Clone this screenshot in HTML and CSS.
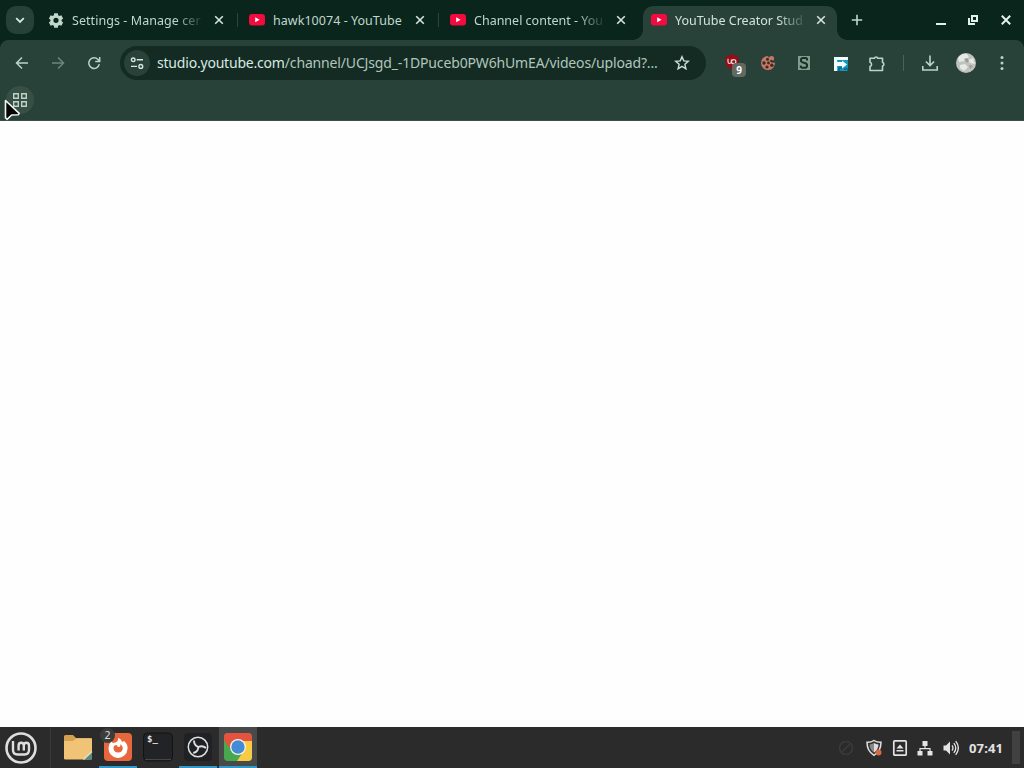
FILE: index.html
```html
<!DOCTYPE html>
<html lang="en">
<head>
<meta charset="utf-8">
<title>YouTube Creator Studio</title>
<link rel="stylesheet" href="styles.css">
</head>
<body>
<svg class="defs" aria-hidden="true">
  <symbol id="x" viewBox="0 0 12 12"><path d="M2.2 2.2l7.6 7.6M9.8 2.2L2.2 9.8" fill="none" stroke="currentColor" stroke-width="1.6"/></symbol>
  <symbol id="yt" viewBox="0 0 16 16"><rect x="0" y="2" width="16" height="11.6" rx="3" fill="#f20b3e"/><path d="M6.2 5.3v5l4.4-2.5z" fill="#fff"/></symbol>
</svg>
<div class="desktop">
  <header class="tabstrip">
    <button class="search"><svg width="12" height="12" viewBox="0 0 12 12"><path d="M2.2 4.2L6 8l3.8-3.8" fill="none" stroke="currentColor" stroke-width="1.8"/></svg></button>
    <div class="tab">
      <svg class="fav" viewBox="0 0 24 24"><path fill="currentColor" fill-rule="evenodd" d="M9.3 2h5.4l.6 3 1.7 1 3-1 2.7 4.700-2.300 2v2.100l2.300 2-2.700 4.700-3-1-1.700 1-.6 3H9.300l-.6-3-1.700-1-3 1-2.700-4.700 2.300-2v-2.100l-2.300-2L4 5l3 1 1.700-1zM12 8.600a3.900 3.900 0 1 0 0 7.800 3.900 3.900 0 0 0 0-7.800z"/></svg>
      <span class="title t1">Settings - Manage cer</span><svg class="close"><use href="#x"/></svg>
    </div>
    <div class="tab">
      <svg class="fav"><use href="#yt"/></svg>
      <span class="title t2">hawk10074 - YouTube</span><svg class="close"><use href="#x"/></svg>
    </div>
    <div class="tab">
      <svg class="fav"><use href="#yt"/></svg>
      <span class="title t3">Channel content - You</span><svg class="close"><use href="#x"/></svg>
    </div>
    <div class="tab active">
      <svg class="fav"><use href="#yt"/></svg>
      <span class="title t4">YouTube Creator Stud</span><svg class="close"><use href="#x"/></svg>
    </div>
    <button class="newtab"><svg width="12" height="12" viewBox="0 0 12 12"><path d="M6 .8v10.4M.8 6h10.4" stroke="currentColor" stroke-width="1.6"/></svg></button>
    <div class="winbtns">
      <svg width="12" height="12" viewBox="0 0 12 12"><path d="M2 10h10" stroke="currentColor" stroke-width="2"/></svg>
      <svg width="12" height="12" viewBox="0 0 12 12"><path d="M5 2h5v5H5zM2 4v6h6" fill="none" stroke="currentColor" stroke-width="2"/></svg>
      <svg width="12" height="12" viewBox="0 0 12 12"><path d="M1.8 1.8l8.4 8.4M10.2 1.8l-8.4 8.4" stroke="currentColor" stroke-width="2"/></svg>
    </div>
  </header>

  <div class="chrome">
    <nav class="toolbar">
      <span class="tool"><svg width="14" height="14" viewBox="0 0 14 14"><path d="M13 7H1.8M7 1.5L1.500 7 7 12.500" fill="none" stroke="currentColor" stroke-width="1.5"/></svg></span>
      <span class="tool dim"><svg width="14" height="14" viewBox="0 0 14 14"><path d="M1 7h11.2M7 1.5L12.500 7 7 12.500" fill="none" stroke="currentColor" stroke-width="1.5"/></svg></span>
      <span class="tool"><svg width="14" height="14" viewBox="0 0 14 14"><path d="M12.3 8.2A5.300 5.300 0 1 1 11 3.500L12.400 5M12.700 1v4.600H8.200" fill="none" stroke="currentColor" stroke-width="1.5"/></svg></span>
      <div class="omnibox">
        <span class="site"><svg width="14" height="14" viewBox="0 0 14 14" fill="none" stroke="currentColor" stroke-width="1.4"><circle cx="3.2" cy="3.8" r="1.8"/><circle cx="10.8" cy="10.4" r="1.9"/><path d="M6.7 3.8H13M1 10.400h6"/></svg></span>
        <span class="url"><b>studio.youtube.com</b>/channel/UCJsgd_-1DPuceb0PW6hUmEA/videos/upload?...</span>
        <svg class="star" viewBox="0 0 16 16"><path d="M8 1.7l1.800 4.200 4.500.4-3.400 3 1 4.500L8 11.400l-3.900 2.400 1-4.500-3.400-3 4.500-.4z" fill="none" stroke="currentColor" stroke-width="1.4"/></svg>
      </div>
      <span class="tool ublock"><svg width="16" height="16" viewBox="0 0 16 16"><path d="M8 0l3 1.500L14.500 3v5.500C14 12 11.500 14 8 15.500 4.500 14 2 12 1.500 8.500V3L5 1.500z" fill="#980b17"/><path d="M4 4.800v3q0 1.700 1.500 1.700T7.300 8V5.500M7.500 8q0-2.300 2.200-2.300t2.200 2-2.200 2-2.200-1.700" fill="none" stroke="#e9d7d7" stroke-width="1.2"/></svg><i class="count">9</i></span>
      <span class="tool"><svg width="16" height="16" viewBox="0 0 16 16"><path d="M8 1a3 3 0 0 0 3 2.500 3 3 0 0 0 4 4A7 7 0 1 1 8 1z" fill="#c87666"/><circle cx="11.500" cy="3.600" r="2.600" fill="#c87666"/><g fill="#33302a"><circle cx="7.500" cy="4.300" r="1.500"/><circle cx="4" cy="8" r="1.700"/><circle cx="8.500" cy="8" r="1.400"/><circle cx="7" cy="12" r="1.600"/><circle cx="11.800" cy="10.300" r="1.700"/><circle cx="11.500" cy="6" r="1.300"/></g></svg></span>
      <span class="tool"><svg width="14" height="16" viewBox="0 0 14 16"><rect x="1" y="1" width="12" height="14" fill="#829d90"/><path d="M10 5.500V3.800L9 3H5.300L4 4.200v2L5 7.200 9 8.500l1 1v2L8.800 12.800H5L3.800 12V10.400" fill="none" stroke="#1d3028" stroke-width="2"/></svg></span>
      <span class="tool nudge"><svg width="14" height="14" viewBox="0 0 14 14"><path d="M0 0h14v14H0z" fill="#1594b8"/><path d="M0 0h14v3H3.200v2H8V3.500L13 7.500l-5 4V9H3.200v5H0z" fill="#f3fcff"/><path d="M5 14v-3h3M10 12h4v2" fill="none" stroke="#096787" stroke-width="1.5"/></svg></span>
      <span class="tool nudge"><svg width="18" height="18" viewBox="0 0 18 18"><path d="M2 3.300h4.500a1.700 1.700 0 0 1 3.300 0H14.500v4.200a1.800 1.800 0 0 1 0 3.500V15.500H2v-4a2.200 2.200 0 0 0 0-4.200z" fill="none" stroke="currentColor" stroke-width="1.6" stroke-linejoin="round"/></svg></span>
      <span class="divider"></span>
      <span class="tool"><svg width="18" height="18" viewBox="0 0 18 18"><path d="M9 1.500v10M4.900 7.500L9 11.600l4.100-4.100M1.800 12v4h14.400v-4" fill="none" stroke="currentColor" stroke-width="1.6"/></svg></span>
      <span class="tool"><svg width="20" height="20" viewBox="0 0 20 20"><circle cx="10" cy="10" r="10" fill="#bfc2bf"/><path d="M2 5q4-5 9-4l2 3-5 4-5 1zM12 7l5-2 2 6-5-1zM4 12l5-1 3 3-4 4-4-3z" fill="#e6e9e6"/><path d="M8 6l3-1 2 3-2 2zM13 12l4 1-3 3z" fill="#979c98"/></svg></span>
      <span class="tool"><svg width="4" height="16" viewBox="0 0 4 16" fill="currentColor"><circle cx="2" cy="2.5" r="1.5"/><circle cx="2" cy="8" r="1.5"/><circle cx="2" cy="13.5" r="1.5"/></svg></span>
    </nav>
    <div class="bookmarks"><span class="apps"><svg width="16" height="16" viewBox="0 0 16 16"><path d="M1.700 1.700h4.600v4.600H1.700zM9.700 1.700h4.600v4.600H9.700zM1.700 9.700h4.600v4.600H1.700zM9.700 9.700h4.600v4.600H9.700z" fill="none" stroke="currentColor" stroke-width="1.4"/></svg></span></div>
  </div>

  <main class="page"></main>

  <footer class="panel">
    <span class="menu"><svg width="34" height="34" viewBox="0 0 34 34" fill="none" stroke="#dedede"><circle cx="17" cy="17" r="14.5" stroke-width="2.6"/><path d="M9 10v9q0 4.500 4.500 4.500h7q4.500 0 4.500-4.500v-4.500q0-2.700-2.600-2.700t-2.600 2.700v5m0-5q0-2.700-2.600-2.700t-2.600 2.700v5" stroke-width="2.4"/></svg></span>
    <span class="task"><svg width="30" height="32" viewBox="0 0 30 32"><path d="M1 4.500Q1 3 2.500 3H10l3 3h14.500Q29 6 29 7.500V27H1z" fill="#d5a14e"/><path d="M1 9h9l3-2.500h16V26q0 1.500-1.500 1.500h-25Q1 27.500 1 26z" fill="#f1c377"/><path d="M21 27.500L29 19.500v8z" fill="#578b80"/><path d="M20.500 27.500l8.500-8" stroke="#e6e3bd" stroke-width="1.2"/></svg></span>
    <span class="task open"><svg width="30" height="32" viewBox="0 0 30 32"><rect x="1" y="1" width="28" height="28" rx="4" fill="#e8663b"/><path d="M15 6q3 .5 4 4l2-1q4 3 3.500 8A9.500 9.500 0 0 1 5.500 16q0-4 3-7l1 2 3-.5q3-1 2.500-4.500z" fill="#fff"/><path d="M14 13q-4 0-3.500 3.500a4.700 4.700 0 0 0 9.300 0q0-3-2.300-4.500.2 3-1.500 3-2 .2-2-2z" fill="#e8663b"/></svg><i class="badge">2</i></span>
    <span class="task"><svg width="30" height="32" viewBox="0 0 30 32"><rect x=".5" y="1" width="29" height="28" rx="4" fill="#222326" stroke="#141414"/><path d="M2 27.500h26" stroke="#45474b"/><text class="prompt" x="4" y="10">$_</text></svg></span>
    <span class="task open"><svg width="30" height="32" viewBox="0 0 30 32"><rect x="1" y="1" width="28" height="28" rx="4" fill="#202124"/><g fill="none" stroke="#dedede"><circle cx="15" cy="15" r="9.7" stroke-width="1.5"/><path d="M11 8.500q0 5 4.300 6.500 4.200-2 7.700 1M15.300 15q.2 4.500-5 6" stroke-width="1.9"/></g></svg></span>
    <span class="task open current"><svg width="30" height="32" viewBox="0 0 30 32"><clipPath id="c"><rect x="1" y="1" width="28" height="28" rx="4"/></clipPath><g clip-path="url(#c)"><path d="M1 1h28v28H1z" fill="#48a84e"/><path d="M1 1h28v9H15L8 18 1 8z" fill="#e5533f"/><path d="M15 9h14v20H14l8-12z" fill="#f7cc43"/></g><circle cx="15" cy="15" r="8" fill="#f6f3ee"/><circle cx="15" cy="15" r="6.700" fill="#438bd4"/></svg></span>
    <div class="tray">
      <span class="w28"><svg width="16" height="16" viewBox="0 0 16 16" fill="none" stroke="#3b3b3b"><circle cx="8" cy="8" r="6.500" stroke-width="1.5"/><path d="M4 12l8-8" stroke-width="1.5"/></svg></span>
      <span class="w27 shield"><svg width="18" height="18" viewBox="0 0 18 18"><path d="M9 1.500q3 2 7 1.800 0 9-7 13-7-4-7-13Q6 3.500 9 1.500z" fill="#343434" stroke="#dedede" stroke-width="1.5"/><path d="M9 4q2 1.200 4.500 1.500-.2 5-4.500 8z" fill="#ddd"/><path d="M9 4Q7 5.200 4.500 5.500q.2 5 4.500 8z" fill="#888"/><circle cx="13.500" cy="13.500" r="3" fill="#db6842"/></svg></span>
      <span class="w25"><svg width="16" height="18" viewBox="0 0 16 18"><rect x="1.800" y="1.800" width="12.400" height="14.400" rx="1" fill="none" stroke="#e4e4e4" stroke-width="1.7"/><path d="M8 5.500l3.500 4h-7zM4.500 11h7v1.500h-7z" fill="#e4e4e4"/></svg></span>
      <span class="w26"><svg width="16" height="16" viewBox="0 0 16 16"><path d="M5.500 1h5v5h-5zM.5 11h5v4.500h-5zM10.500 11h5v4.500h-5z" fill="#e4e4e4"/><path d="M8 6v3M3 11V8.700h10V11" fill="none" stroke="#e4e4e4" stroke-width="1.2"/></svg></span>
      <span class="w26"><svg width="16" height="16" viewBox="0 0 16 16"><path d="M.5 5.500H3l4-4v13l-4-4H.5z" fill="#e4e4e4"/><path d="M9 5.500q2 2.500 0 5M10.800 3.200q4 4.800 0 9.600M12.700 1.200q5.300 6.800 0 13.600" fill="none" stroke="#e4e4e4" stroke-width="1.3"/></svg></span>
      <time>07:41</time>
      <span class="show-desktop"></span>
    </div>
  </footer>
</div>
<svg class="cursor" width="18" height="24" viewBox="0 0 18 24"><path d="M1.500 1.500v17.300l1.500 1.500 4.700-4.300 6.700-.3.800-1.400z" fill="#050706" stroke="#f4f6f5" stroke-width="1.6" stroke-linejoin="round"/></svg>
</body>
</html>
```

FILE: styles.css
```css
* { box-sizing: border-box; }
body { margin: 0; font-family: "Noto Sans", sans-serif; overflow: hidden; }
button { border: 0; padding: 0; background: none; color: inherit; }
svg { display: block; flex: none; }
i { font-style: normal; }
.defs { display: none; }
.desktop { width: 1024px; height: 768px; display: flex; flex-direction: column; background: #fefefe; }

.tabstrip { height: 40px; flex: none; display: flex; align-items: center; background: #0a251c; color: #c0d7cc; padding-left: 6px; }
.search { width: 28px; height: 28px; border-radius: 10px; background: #264137; display: grid; place-items: center; margin-right: 4px; color: #d5e8df; }
.tab { width: 201px; height: 40px; flex: none; display: flex; align-items: center; padding-left: 10px; position: relative; }
.tab:not(.active)::after { content: ""; position: absolute; right: 1px; top: 13px; width: 1px; height: 14px; background: #2c463c; }
.tab:nth-of-type(3)::after { display: none; }
.fav { width: 16px; height: 16px; margin-right: 8px; }
.title { width: 131px; font-size: 12.5px; line-height: 20px; padding-top: 1px; white-space: nowrap; -webkit-mask-image: linear-gradient(90deg, #000 103px, transparent 133px); mask-image: linear-gradient(90deg, #000 103px, transparent 133px); }
.t1 { letter-spacing: .06px; }
.t2 { -webkit-mask-image: none; mask-image: none; letter-spacing: .04px; }
.close { width: 12px; height: 12px; margin-left: 10px; color: #d3e5dc; }
.active { isolation: isolate; color: #d0e3da; }
.active .close { margin-left: 9px; }
.active::before { content: ""; position: absolute; z-index: -1; left: 2px; right: 5px; top: 6px; bottom: 0; border-radius: 10px 10px 0 0; background: #284239; }
.active::after { content: ""; position: absolute; z-index: -1; left: -8px; right: -5px; bottom: 0; height: 10px; background: radial-gradient(circle at 0 0, transparent 9.5px, #284239 10px) left / 10px 10px no-repeat, radial-gradient(circle at 100% 0, transparent 9.5px, #284239 10px) right / 10px 10px no-repeat; }
.newtab { width: 28px; height: 28px; display: grid; place-items: center; margin-left: 1px; }
.winbtns { margin-left: auto; display: flex; gap: 21px; padding-right: 12px; color: #e2f2ea; }

.chrome { height: 81px; flex: none; background: #284239; position: relative; color: #bdd1c7; border-bottom: 1px solid #3b5047; }
.chrome::before { content: ""; position: absolute; inset: 0 0 auto; height: 8px; background: radial-gradient(circle at 100% 100%, transparent 7.5px, #0a251c 8px) left / 8px 8px no-repeat, radial-gradient(circle at 0 100%, transparent 7.5px, #0a251c 8px) right / 8px 8px no-repeat; }
.toolbar { height: 46px; display: flex; align-items: center; padding: 0 4px; }
.tool { width: 36px; height: 34px; flex: none; display: grid; place-items: center; position: relative; }
.nudge { padding: 1px 0 0 2px; }
.dim { color: #6c8679; }
.omnibox { width: 586px; height: 34px; margin: 0 8px; border-radius: 17px; background: #142b23; display: flex; align-items: center; padding-left: 4px; flex: none; }
.site { width: 26px; height: 26px; border-radius: 13px; background: #284239; display: grid; place-items: center; margin-right: 7px; color: #d5e7de; }
.url { width: 517px; font-size: 14px; line-height: 24px; letter-spacing: -.155px; white-space: nowrap; color: #b0c6bb; }
.url b { font-weight: 400; color: #d8e9e0; letter-spacing: -.2px; }
.star { width: 16px; height: 16px; color: #cce0d6; }
.count { position: absolute; left: 18px; top: 17px; width: 14px; height: 14px; border-radius: 4px; background: #626963; color: #fff; font-size: 10px; font-weight: 700; line-height: 14px; text-align: center; }
.ublock svg { transform: translateY(-1px); }
.divider { width: 18px; height: 16px; display: flex; justify-content: center; }
.divider::before { content: ""; width: 1px; background: #4a6358; }
.bookmarks { padding-left: 6px; }
.apps { width: 28px; height: 28px; border-radius: 14px; background: #384f45; display: grid; place-items: center; }

.page { flex: 1; background: #fefefe; }

.panel { height: 41px; flex: none; background: #2b2b2b; display: flex; align-items: center; }
.menu { width: 51px; height: 41px; padding-left: 4px; display: flex; align-items: center; border-right: 1px solid #393939; margin-right: 7px; }
.task { width: 40px; height: 41px; position: relative; display: grid; place-items: center; }
.open { border: solid #2b2b2b; border-width: 0 1px; box-shadow: inset 0 -2px #3198c9; }
.current { background: #484a49; }
.badge { position: absolute; left: 1px; top: 1px; width: 15px; height: 15px; border-radius: 8px; background: #3b3d3d; color: #dedede; font-size: 10.5px; line-height: 15px; text-align: center; }
.prompt { font: bold 9px "DejaVu Sans Mono", monospace; fill: #e6e6e6; }
.tray { margin-left: auto; display: flex; align-items: center; height: 41px; padding-right: 4px; }
.w28 { width: 27px; }
.w27 { width: 27px; }
.w26 { width: 26px; }
.w25 { width: 25px; }
.tray time { width: 43px; font: 700 13px/18px "Noto Sans", sans-serif; letter-spacing: .15px; color: #e2e2e2; white-space: nowrap; }
.show-desktop { width: 8px; height: 33px; background: #414141; }
.cursor { position: absolute; left: 4px; top: 99px; }
```
